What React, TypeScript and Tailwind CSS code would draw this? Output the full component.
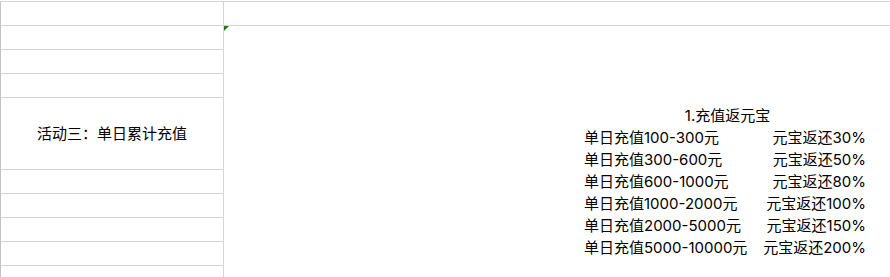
import React from "react";

const font = { fontFamily: 'Inter,"Noto Sans CJK SC",sans-serif' };

const rows: [string, string][] = [
  ["单日充值100-300元", "元宝返还30%"],
  ["单日充值300-600元", "元宝返还50%"],
  ["单日充值600-1000元", "元宝返还80%"],
  ["单日充值1000-2000元", "元宝返还100%"],
  ["单日充值2000-5000元", "元宝返还150%"],
  ["单日充值5000-10000元", "元宝返还200%"],
];

export default function App() {
  return (
    <div className="w-[890px] h-[277px] overflow-hidden bg-white pt-px text-black" style={font}>
      <div className="flex border-t border-[#d4d4d4]">
        <div className="w-[224px] shrink-0 flex flex-col border-l border-l-[#c4c4c4] border-r border-r-[#d4d4d4]">
          <div className="h-[24px] border-b border-[#d4d4d4]" />
          <div className="h-[24px] border-b border-[#d4d4d4]" />
          <div className="h-[24px] border-b border-[#d4d4d4]" />
          <div className="h-[24px] border-b border-[#d4d4d4]" />
          <div className="h-[72px] border-b border-[#d4d4d4] flex items-center justify-center text-[15px] leading-[22px]">
            活动三：单日累计充值
          </div>
          <div className="h-[24px] border-b border-[#d4d4d4]" />
          <div className="h-[24px] border-b border-[#d4d4d4]" />
          <div className="h-[24px] border-b border-[#d4d4d4]" />
          <div className="h-[24px] border-b border-[#d4d4d4]" />
          <div className="h-[24px] border-b border-[#d4d4d4]" />
        </div>
        <div className="flex-1 flex flex-col">
          <div className="h-[24px] border-b border-[#d4d4d4]" />
          <div className="relative flex-1">
            <svg className="absolute left-0 top-0" width="5" height="5" viewBox="0 0 5 5">
              <polygon points="0,0 5,0 0,5" fill="#1a7a1a" />
            </svg>
            <div className="ml-[360px] w-[282px] pt-[79px] text-[15px] leading-[22px]">
              <div className="text-center pl-[5px]">1.充值返元宝</div>
              {rows.map(([a, b]) => (
                <div key={a} className="flex justify-between">
                  <span>{a}</span>
                  <span>{b}</span>
                </div>
              ))}
            </div>
          </div>
        </div>
      </div>
    </div>
  );
}
